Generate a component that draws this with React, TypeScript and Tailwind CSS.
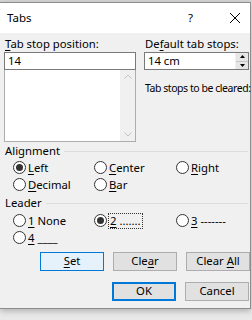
import React from "react";

const U = ({ c }: { c: string }) => <span className="underline underline-offset-2 decoration-1">{c}</span>;

function Radio({ checked, children, focus }: { checked?: boolean; children: React.ReactNode; focus?: boolean }) {
  return (
    <div className="flex items-center h-[17px]">
      <div className="w-[13px] h-[13px] rounded-full border border-[#333] bg-white flex items-center justify-center shrink-0">
        {checked && <div className="w-[7px] h-[7px] rounded-full bg-[#333]" />}
      </div>
      <div className={"ml-[2px] leading-[14px] whitespace-pre " + (focus ? "outline outline-1 outline-dotted outline-[#333] px-[1px]" : "")}>{children}</div>
    </div>
  );
}

function Btn({ children, kind }: { children: React.ReactNode; kind?: "set" | "ok" }) {
  const cls =
    kind === "set"
      ? "bg-[#e5f1fb] border border-[#0078d7]"
      : kind === "ok"
      ? "bg-[#e1e1e1] border-2 border-[#0078d7]"
      : "bg-[#e1e1e1] border border-[#adadad]";
  return (
    <div className={"w-[64px] h-[19px] flex items-center justify-center " + cls}>
      <span className="whitespace-pre">{children}</span>
    </div>
  );
}

export default function App() {
  return (
    <div
      className="w-[252px] h-[320px] bg-[#e9e9e9] text-[11.3px] text-black overflow-hidden"
      style={{ fontFamily: "'Noto Sans', 'Segoe UI', sans-serif" }}
    >
      <div className="h-[2px] bg-[#d6d6d6]" />
      <div className="w-[251px] border-t border-r border-b border-[#8c8c8c] shadow-[0_2px_6px_rgba(0,0,0,0.25)]">
        <div className="h-[30px] bg-white flex items-center pl-[7px] text-[11.5px]">
          <span className="flex-1">Tabs</span>
          <span className="w-[10px] mr-[31px]">?</span>
          <svg width="12" height="12" viewBox="0 0 12 12" className="mr-[9px]">
            <path d="M1 1 L11 11 M11 1 L1 11" stroke="#000" strokeWidth="1" />
          </svg>
        </div>
        <div className="bg-[#f0f0f0] h-[275px] pl-[4px] pt-[4px]">
          <div className="flex">
            <div className="w-[132px]">
              <div className="h-[15px] leading-[14px] pl-[1px]"><U c="T" />ab stop position:</div>
              <div className="h-[18px] bg-white border border-[#7a7a7a] pl-[3px] leading-[16px]">14</div>
              <div className="h-[72px] bg-white border border-[#adadad] border-t-0 flex justify-end">
                <div className="w-[15px] bg-[#f0f0f0] flex flex-col justify-between items-center py-[4px]">
                  <svg width="8" height="5" viewBox="0 0 8 5"><path d="M0.5 4.5 L4 1 L7.5 4.5" fill="none" stroke="#c2c2c2" /></svg>
                  <svg width="8" height="5" viewBox="0 0 8 5"><path d="M0.5 0.5 L4 4 L7.5 0.5" fill="none" stroke="#c2c2c2" /></svg>
                </div>
              </div>
            </div>
            <div className="ml-[8px] w-[105px]">
              <div className="h-[15px] leading-[14px] pl-[1px]">De<U c="f" />ault tab stops:</div>
              <div className="h-[18px] bg-white border border-[#7a7a7a] flex">
                <div className="flex-1 pl-[3px] leading-[16px]">14 cm</div>
                <div className="w-[13px] flex flex-col border-l border-[#f0f0f0]">
                  <div className="flex-1 bg-[#e6e6e6] flex items-center justify-center border-b border-[#c8c8c8]">
                    <svg width="5" height="3" viewBox="0 0 5 3"><path d="M0 3 L2.5 0 L5 3Z" fill="#000" /></svg>
                  </div>
                  <div className="flex-1 bg-[#e6e6e6] flex items-center justify-center">
                    <svg width="5" height="3" viewBox="0 0 5 3"><path d="M0 0 L2.5 3 L5 0Z" fill="#000" /></svg>
                  </div>
                </div>
              </div>
              <div className="mt-[11px] leading-[14px] pl-[1px] whitespace-nowrap text-[10.5px] tracking-[-0.45px]">Tab stops to be cleared:</div>
            </div>
          </div>
          <div className="mt-[2px] flex items-center h-[14px] pl-[1px]">
            <span>Alignment</span>
            <div className="flex-1 h-px bg-[#dcdcdc] ml-[4px] mr-[2px]" />
          </div>
          <div className="pl-[9px] mt-[1px] grid grid-cols-[81px_82px_60px]">
            <Radio checked><U c="L" />eft</Radio>
            <Radio><U c="C" />enter</Radio>
            <Radio><U c="R" />ight</Radio>
            <Radio><U c="D" />ecimal</Radio>
            <Radio><U c="B" />ar</Radio>
          </div>
          <div className="mt-[3px] flex items-center h-[14px] pl-[1px]">
            <span>Leader</span>
            <div className="flex-1 h-px bg-[#dcdcdc] ml-[4px] mr-[2px]" />
          </div>
          <div className="pl-[9px] mt-[2px] grid grid-cols-[81px_82px_60px]">
            <Radio><U c="1" />{" None"}</Radio>
            <Radio checked focus><U c="2" />{" ......."}</Radio>
            <Radio><U c="3" />{" -------"}</Radio>
            <Radio><U c="4" />{" ____"}</Radio>
          </div>
          <div className="mt-[6px] flex gap-[9px] pl-[36px]">
            <Btn kind="set"><U c="S" />et</Btn>
            <Btn>Cle<U c="a" />r</Btn>
            <Btn>{"Clear "}<U c="A" />ll</Btn>
          </div>
          <div className="mt-[11px] flex gap-[9px] pl-[108px]">
            <Btn kind="ok">OK</Btn>
            <Btn>Cancel</Btn>
          </div>
        </div>
      </div>
    </div>
  );
}
